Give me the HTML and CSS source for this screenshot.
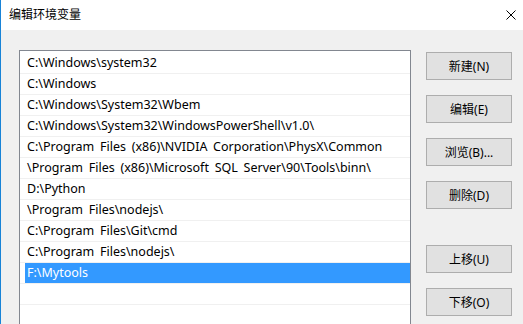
FILE: index.html
```html
<!DOCTYPE html>
<html lang="zh-CN">
<head>
  <meta charset="UTF-8">
  <title>编辑环境变量</title>
  <link rel="stylesheet" href="styles.css">
</head>
<body>
  <div class="window">
    <!-- Title bar -->
    <div class="titlebar">
      <span class="title">编辑环境变量</span>
      <svg class="close" width="10" height="10" viewBox="0 0 10 10">
        <path d="M0.5 0.5 L9.5 9.5 M9.5 0.5 L0.5 9.5" stroke="#000" stroke-width="1" fill="none"/>
      </svg>
    </div>

    <!-- Dialog body -->
    <div class="content">
      <div class="list">
        <div class="row"><span class="label">C:\Windows\system32</span></div>
        <div class="row"><span class="label">C:\Windows</span></div>
        <div class="row"><span class="label">C:\Windows\System32\Wbem</span></div>
        <div class="row"><span class="label">C:\Windows\System32\WindowsPowerShell\v1.0\</span></div>
        <div class="row"><span class="label">C:\Program Files (x86)\NVIDIA Corporation\PhysX\Common</span></div>
        <div class="row"><span class="label">\Program Files (x86)\Microsoft SQL Server\90\Tools\binn\</span></div>
        <div class="row"><span class="label">D:\Python</span></div>
        <div class="row"><span class="label">\Program Files\nodejs\</span></div>
        <div class="row"><span class="label">C:\Program Files\Git\cmd</span></div>
        <div class="row"><span class="label">C:\Program Files\nodejs\</span></div>
        <div class="row selected"><span class="label">F:\Mytools</span></div>
        <div class="row"><span class="label"></span></div>
        <div class="row"><span class="label"></span></div>
      </div>

      <div class="buttons">
        <button>新建(N)</button>
        <button>编辑(E)</button>
        <button>浏览(B)...</button>
        <button>删除(D)</button>
        <button class="push">上移(U)</button>
        <button>下移(O)</button>
      </div>
    </div>
  </div>
</body>
</html>
```

FILE: styles.css
```css
body {
  margin: 0;
  padding: 0;
  font-family: "Noto Sans", "Noto Sans CJK SC", sans-serif;
  font-size: 12px;
  color: #000;
  background: #f0f0f0;
  overflow: hidden;
}
.window {
  height: 324px;
  border-left: 1px solid #1883d7;
  background: #f0f0f0;
  overflow: hidden;
}
.titlebar {
  height: 30px;
  background: #fff;
  display: flex;
  align-items: center;
  justify-content: space-between;
  padding: 0 7px 0 8px;
}
.title {
  font-size: 12px;
  line-height: 30px;
}
.close {
  display: block;
}
.content {
  display: flex;
  align-items: flex-start;
  padding: 20px 0 0 18px;
}
.list {
  width: 390px;
  height: 300px;
  border: 1px solid #828790;
  background: #fff;
  padding-top: 2px;
  font-size: 12.5px;
  word-spacing: 2.5px;
}
.row {
  height: 20px;
  border-bottom: 1px solid #f0f0f0;
  padding-left: 5px;
}
.label {
  display: block;
  height: 20px;
  line-height: 20px;
  padding-left: 2px;
  white-space: nowrap;
  overflow: hidden;
}
.row.selected .label {
  background: #3399ff;
  color: #fff;
}
.buttons {
  display: flex;
  flex-direction: column;
  gap: 15px;
  margin-left: 15px;
  padding-top: 2px;
}
.buttons button {
  width: 86px;
  height: 28px;
  background: #e1e1e1;
  border: 1px solid #adadad;
  border-radius: 0;
  font-family: inherit;
  font-size: 12px;
  color: #000;
  padding: 0;
}
.buttons .push {
  margin-top: 21px;
}
```
